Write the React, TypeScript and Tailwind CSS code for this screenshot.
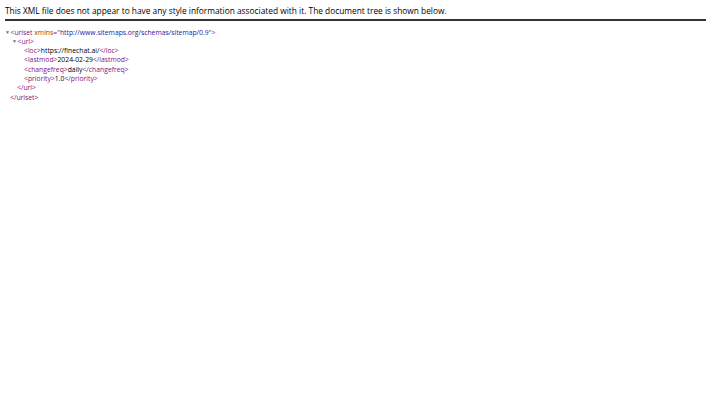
const tag = "text-[#881280]";
const attr = "text-[#994500]";
const val = "text-[#1a1aa6]";

function Arrow() {
  return (
    <span className="inline-block w-[5px] mr-[0.5px] text-[#6e6e6e] text-[5px] align-middle leading-none">▼</span>
  );
}

function Line({ indent, children, arrow }: { indent: string; children: React.ReactNode; arrow?: boolean }) {
  return (
    <div className={`flex items-center h-[9.3px] ${indent}`}>
      {arrow && <Arrow />}
      <span className="whitespace-nowrap">{children}</span>
    </div>
  );
}

export default function App() {
  return (
    <div className="min-h-[400px] w-[711px] bg-white text-black" style={{ fontFamily: '"Open Sans", sans-serif' }}>
      <div className="mx-[5px] pt-[5px] pb-[2px] border-b-2 border-[#333] text-[8.35px] leading-[12px]">
        This XML file does not appear to have any style information associated with it. The document tree is shown below.
      </div>
      <div className="pt-[7px] text-[6.8px]">
        <Line indent="pl-[5px]" arrow>
          <span className={tag}>&lt;urlset</span> <span className={attr}>xmlns</span>
          <span className={tag}>="</span>
          <span className={val}>http://www.sitemaps.org/schemas/sitemap/0.9</span>
          <span className={tag}>"&gt;</span>
        </Line>
        <Line indent="pl-[12px]" arrow>
          <span className={tag}>&lt;url&gt;</span>
        </Line>
        <Line indent="pl-[24px]">
          <span className={tag}>&lt;loc&gt;</span>https://finechat.ai/<span className={tag}>&lt;/loc&gt;</span>
        </Line>
        <Line indent="pl-[24px]">
          <span className={tag}>&lt;lastmod&gt;</span>2024-02-29<span className={tag}>&lt;/lastmod&gt;</span>
        </Line>
        <Line indent="pl-[24px]">
          <span className={tag}>&lt;changefreq&gt;</span>daily<span className={tag}>&lt;/changefreq&gt;</span>
        </Line>
        <Line indent="pl-[24px]">
          <span className={tag}>&lt;priority&gt;</span>1.0<span className={tag}>&lt;/priority&gt;</span>
        </Line>
        <Line indent="pl-[17px]">
          <span className={tag}>&lt;/url&gt;</span>
        </Line>
        <Line indent="pl-[10px]">
          <span className={tag}>&lt;/urlset&gt;</span>
        </Line>
      </div>
    </div>
  );
}
